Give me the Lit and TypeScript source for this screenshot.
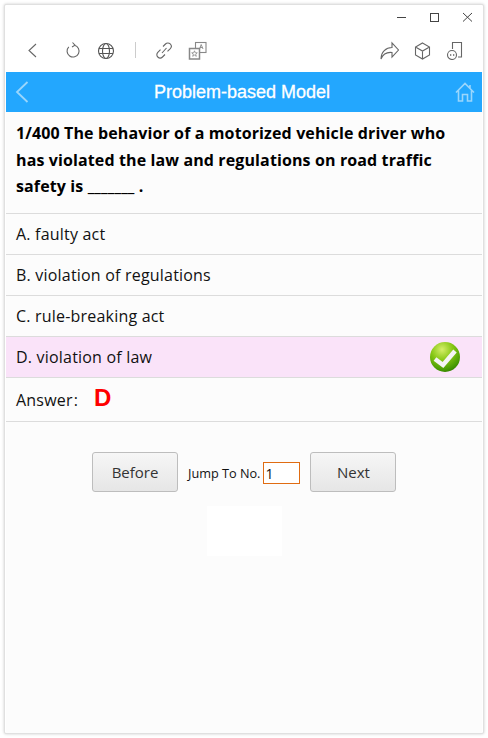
import { LitElement, html, css } from "lit";
import { customElement } from "lit/decorators.js";

@customElement("app-root")
export class AppRoot extends LitElement {
  static styles = css`
    :host { display: block; width: 488px; height: 738px; box-sizing: border-box; padding: 4px; background: #fff; font-family: "Open Sans", "Noto Sans", sans-serif; color: #000; overflow: hidden; }
    .win { height: 100%; box-sizing: border-box; border: 1px solid #e0e0e0; border-radius: 2px; background: #fff; display: flex; flex-direction: column; box-shadow: 0 0 3px #ccc; }
    .titlebar { height: 23px; flex: none; display: flex; justify-content: flex-end; align-items: flex-start; padding: 4px 8px 0 0; box-sizing: border-box; gap: 17px; }
    .titlebar svg { display: block; width: 16px; height: 16px; fill: none; stroke: #444; stroke-width: 1; }
    .toolbar { height: 44px; flex: none; display: flex; align-items: center; padding: 0 18px 0 17px; box-sizing: border-box; }
    .toolbar svg { display: block; width: 20px; height: 20px; fill: none; stroke: #666; stroke-width: 1.1; }
    .left { display: flex; align-items: center; }
    .right { margin-left: auto; display: flex; align-items: center; gap: 13px; }
    .back { margin-right: 21px; }
    .reload { margin-right: 13px; }
    .globe { stroke: #555 !important; }
    .trans { stroke: #888 !important; }
    .sep { width: 1px; height: 16px; background: #ccc; margin: 0 18px 0 19px; }
    .link { margin-right: 14px; }
    .page { flex: 1; min-height: 0; margin: 0 1px; background: #fcfcfc; display: flex; flex-direction: column; }
    .head { height: 40px; flex: none; background: #23a7fe; display: flex; align-items: center; justify-content: space-between; padding: 0 7px 0 9px; position: relative; }
    .head h1 { position: absolute; left: 0; right: 4px; margin: 0; text-align: center; font: 18px/40px "Liberation Sans", Arial, sans-serif; color: #fff; -webkit-text-stroke: 0.3px #fff; }
    .head svg { display: block; fill: none; stroke: #9ad6fc; position: relative; }
    .q { height: 101px; flex: none; box-sizing: border-box; padding: 8px 20px 0 10px; font-size: 16px; font-weight: 700; line-height: 26.5px; letter-spacing: 0.12px; color: #000; }
    .opt { height: 41px; flex: none; box-sizing: border-box; border-top: 1px solid #dcdcdc; padding: 0 10px; font-size: 16px; letter-spacing: 0.2px; display: flex; align-items: center; justify-content: space-between; color: #111; }
    .opt.sel { background: #fae3f9; }
    .check { display: block; margin-right: 12px; }
    .ans { height: 45px; flex: none; box-sizing: border-box; border-top: 1px solid #dcdcdc; border-bottom: 1px solid #dcdcdc; padding: 0 10px; font-size: 16px; letter-spacing: 0.2px; display: flex; align-items: center; color: #111; }
    .colon { margin-left: 1px; }
    .ans b { color: #f00; font: bold 24px/1 "Liberation Sans", Arial, sans-serif; margin-left: 16px; position: relative; top: -2px; }
    .nav { display: flex; align-items: flex-start; padding-left: 86px; margin-top: 30px; height: 40px; }
    .btn { width: 86px; height: 40px; box-sizing: border-box; border: 1px solid #bdbdbd; border-radius: 3px; background: linear-gradient(#f6f6f6, #e6e6e6); font: 15px "Open Sans", "Noto Sans", sans-serif; color: #333; padding: 0; }
    .jump { font-size: 12.7px; line-height: 22px; margin: 10px 3px 0 10px; color: #111; white-space: nowrap; }
    .inp { width: 37px; height: 22px; box-sizing: border-box; border: 1px solid #e06c12; background: #fff; font: 14px "Open Sans", "Noto Sans", sans-serif; color: #111; padding: 0 0 0 1px; margin: 10px 10px 0 0; outline: none; }
    .blank { width: 75px; height: 50px; background: #fff; margin: 14px 0 0 201px; }
  `;

  render() {
    return html`<div class="win">
      <div class="titlebar">
        <svg viewBox="0 0 16 16"><path d="M4 8.500h9"/></svg>
        <svg viewBox="0 0 16 16"><rect x="4.500" y="4.500" width="8" height="8"/></svg>
        <svg viewBox="0 0 16 16"><path d="M4 4l9 8.500M13 4l-9 8.500"/></svg>
      </div>
      <div class="toolbar">
        <div class="left">
          <svg class="back" viewBox="0 0 20 20"><path d="M14 4L7 10.500 14 17"/></svg>
          <svg class="reload" viewBox="0 0 20 20"><path d="M11.500 5.200A6 6 0 1 1 5.800 6.800M9.500 2.500l2.500 2.700-3 1.800"/></svg>
          <svg class="globe" viewBox="0 0 20 20"><circle cx="10" cy="11" r="7.500"/><ellipse cx="10" cy="11" rx="3.500" ry="7.500"/><path d="M3 8.500h14M3 13.500h14"/></svg>
          <div class="sep"></div>
          <svg class="link" viewBox="0 0 20 20"><path d="M8 13l4.500-5M9 6.500l2.500-2.500a3.300 3.300 0 0 1 4.800 4.600l-2.800 2.700M11 14.500L8.500 17A3.300 3.300 0 0 1 3.800 12.300l2.700-2.700"/></svg>
          <svg class="trans" viewBox="0 0 20 20"><rect x="7.500" y="2.500" width="10.500" height="10"/><rect x="1.500" y="8.500" width="10" height="10.500" fill="#fff" stroke-width="1.500"/><path d="M11.500 9l1.700-4.500L15 9M12 7.500h2.500" stroke-width="0.900"/><path d="M6.500 10.800l.8 2h2l-1.600 1.300.6 2.200-1.800-1.200-1.800 1.200.6-2.200-1.600-1.300h2z" stroke-width="0.800"/></svg>
        </div>
        <div class="right">
          <svg viewBox="0 0 20 20"><path d="M2 19C2 12 7 7.500 13 7.500V3l6.500 7-6.500 7v-4.500C8 12 4 14 2 19z"/></svg>
          <svg viewBox="0 0 20 20"><path d="M10.500 3l7 4v8l-7 4-7-4V7zM3.500 7l7 4 7-4M10.500 11v8"/></svg>
          <svg viewBox="0 0 20 20"><path d="M7.500 9V2.500h9V17H13"/><circle cx="7" cy="15" r="4.500"/><path d="M5 15h1.300M8 15h1.300" stroke-width="1.500"/></svg>
        </div>
      </div>
      <div class="page">
        <div class="head">
          <svg width="14" height="22" viewBox="0 0 14 22" stroke-width="1.800"><path d="M12.500 1L2 11l10.500 10"/></svg>
          <h1>Problem-based Model</h1>
          <svg width="20" height="20" viewBox="0 0 20 20" stroke-width="1.600"><path d="M1 10.500L10 1.500l9 9M3.500 8.500V19h4v-6.500h5V19h4V8.500M15 3v3"/></svg>
        </div>
        <div class="q">1/400 The behavior of a motorized vehicle driver who has violated the law and regulations on road traffic safety is _______ .</div>
        <div class="opt">A. faulty act</div>
        <div class="opt">B. violation of regulations</div>
        <div class="opt">C. rule-breaking act</div>
        <div class="opt sel">D. violation of law
          <svg class="check" width="30" height="30" viewBox="0 0 30 30">
            <defs><radialGradient id="g" cx="0.4" cy="0.25" r="0.8"><stop offset="0" stop-color="#d6ee6a"/><stop offset="0.45" stop-color="#86c714"/><stop offset="0.85" stop-color="#469a02"/><stop offset="1" stop-color="#2f7a00"/></radialGradient></defs>
            <circle cx="15" cy="15" r="15" fill="url(#g)"/>
            <path d="M5 17l8 6L25 9" fill="none" stroke="#f4f4f4" stroke-width="4.500"/>
          </svg>
        </div>
        <div class="ans">Answer<span class="colon">:</span> <b>D</b></div>
        <div class="nav">
          <button class="btn">Before</button>
          <span class="jump">Jump To No.</span>
          <input class="inp" value="1" />
          <button class="btn">Next</button>
        </div>
        <div class="blank"></div>
      </div>
    </div>`;
  }
}
